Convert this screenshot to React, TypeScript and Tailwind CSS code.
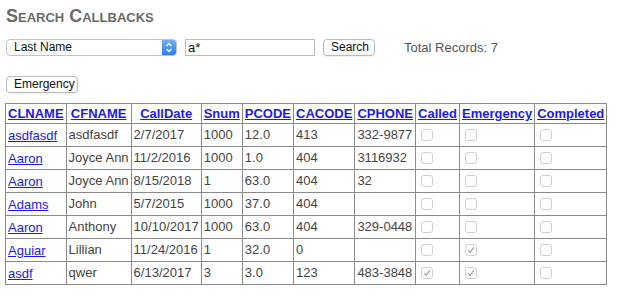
import React from 'react';

type Row = {
  last: string;
  first: string;
  date: string;
  snum: string;
  pcode: string;
  cacode: string;
  phone: string;
  called: boolean;
  emergency: boolean;
  completed: boolean;
};

const ROWS: Row[] = [
  { last: 'asdfasdf', first: 'asdfasdf', date: '2/7/2017', snum: '1000', pcode: '12.0', cacode: '413', phone: '332-9877', called: false, emergency: false, completed: false },
  { last: 'Aaron', first: 'Joyce Ann', date: '11/2/2016', snum: '1000', pcode: '1.0', cacode: '404', phone: '3116932', called: false, emergency: false, completed: false },
  { last: 'Aaron', first: 'Joyce Ann', date: '8/15/2018', snum: '1', pcode: '63.0', cacode: '404', phone: '32', called: false, emergency: false, completed: false },
  { last: 'Adams', first: 'John', date: '5/7/2015', snum: '1000', pcode: '37.0', cacode: '404', phone: '', called: false, emergency: false, completed: false },
  { last: 'Aaron', first: 'Anthony', date: '10/10/2017', snum: '1000', pcode: '63.0', cacode: '404', phone: '329-0448', called: false, emergency: false, completed: false },
  { last: 'Aguiar', first: 'Lillian', date: '11/24/2016', snum: '1', pcode: '32.0', cacode: '0', phone: '', called: false, emergency: true, completed: false },
  { last: 'asdf', first: 'qwer', date: '6/13/2017', snum: '3', pcode: '3.0', cacode: '123', phone: '483-3848', called: true, emergency: true, completed: false },
];

const HEADERS = ['CLNAME', 'CFNAME', 'CallDate', 'Snum', 'PCODE', 'CACODE', 'CPHONE', 'Called', 'Emergency', 'Completed'];
const WIDTHS = [60, 64, 70, 41, 50, 61, 60, 44, 74, 72];

const Check: React.FC<{ on: boolean }> = ({ on }) => (
  <span className="ml-[3px] flex h-[12px] w-[12px] items-center justify-center rounded-[3px] border border-[#cfcfcf] bg-white">
    {on && (
      <svg width="8" height="8" viewBox="0 0 8 8">
        <path d="M1.2 4.3 L3.2 6.3 L6.8 1.4" fill="none" stroke="#9a9a9a" strokeWidth="1.1" />
      </svg>
    )}
  </span>
);

const Btn: React.FC<{ children: React.ReactNode; className?: string }> = ({ children, className }) => (
  <button className={`h-[17px] rounded-[4px] border border-[#b9b9b9] bg-white px-[7px] text-[12px] leading-[15px] text-[#111] shadow-[0_1px_0_rgba(0,0,0,0.05)] ${className ?? ''}`}>
    {children}
  </button>
);

export default function App() {
  return (
    <div className="min-h-[307px] w-[618px] bg-white px-[6px] pt-[5px] font-['Liberation_Sans',Arial,sans-serif] text-[13px] text-[#444]">
      <h1 className="text-[18px] font-bold leading-[22px] text-[#6a6a6a] [font-variant:small-caps]">Search Callbacks</h1>

      <div className="mt-[11px] flex items-center">
        <div className="flex h-[17px] w-[171px] items-stretch rounded-[4px] border border-[#c3c3c3] bg-white">
          <span className="flex-1 pl-[7px] text-[12px] leading-[15px] text-[#111]">Last Name</span>
          <span className="flex w-[14px] items-center justify-center rounded-r-[3px] bg-gradient-to-b from-[#6cb0fb] to-[#2f7bef]">
            <svg width="8" height="11" viewBox="0 0 8 11">
              <path d="M1.5 4 L4 1.5 L6.5 4 M1.5 7 L4 9.5 L6.5 7" fill="none" stroke="#fff" strokeWidth="1.3" />
            </svg>
          </span>
        </div>
        <div className="ml-[8px] h-[17px] w-[130px] border border-[#bdbdbd] bg-white pl-[2px] text-[13px] leading-[15px] text-[#111]">a*</div>
        <Btn className="ml-[8px] w-[52px]">Search</Btn>
        <span className="ml-[29px] text-[13px] text-[#555]">Total Records: 7</span>
      </div>

      <div className="mt-[16px]">
        <Btn className="w-[72px]">Emergency</Btn>
      </div>

      <table className="-ml-[1px] mt-[10px] table-fixed border-collapse border border-[#8a8a8a]">
        <colgroup>
          {WIDTHS.map((w, i) => (
            <col key={i} style={{ width: w }} />
          ))}
        </colgroup>
        <thead>
          <tr className="h-[20px]">
            {HEADERS.map((h) => (
              <th key={h} className="border border-[#8a8a8a] px-[2px] py-0 text-center text-[13px] font-bold leading-[15px]">
                <a href="#" className="text-[#1a1aee] underline">{h}</a>
              </th>
            ))}
          </tr>
        </thead>
        <tbody>
          {ROWS.map((r, i) => (
            <tr key={i} className="h-[23px]">
              <td className="border border-[#8a8a8a] px-[2px] leading-[15px] whitespace-nowrap">
                <a href="#" className="text-[#1a1aee] underline">{r.last}</a>
              </td>
              <td className="border border-[#8a8a8a] px-[2px] whitespace-nowrap">{r.first}</td>
              <td className="border border-[#8a8a8a] px-[2px] whitespace-nowrap">{r.date}</td>
              <td className="border border-[#8a8a8a] px-[2px]">{r.snum}</td>
              <td className="border border-[#8a8a8a] px-[2px]">{r.pcode}</td>
              <td className="border border-[#8a8a8a] px-[2px]">{r.cacode}</td>
              <td className="border border-[#8a8a8a] px-[2px]">{r.phone}</td>
              <td className="border border-[#8a8a8a] px-[2px]"><Check on={r.called} /></td>
              <td className="border border-[#8a8a8a] px-[2px]"><Check on={r.emergency} /></td>
              <td className="border border-[#8a8a8a] px-[2px]"><Check on={r.completed} /></td>
            </tr>
          ))}
        </tbody>
      </table>
    </div>
  );
}
